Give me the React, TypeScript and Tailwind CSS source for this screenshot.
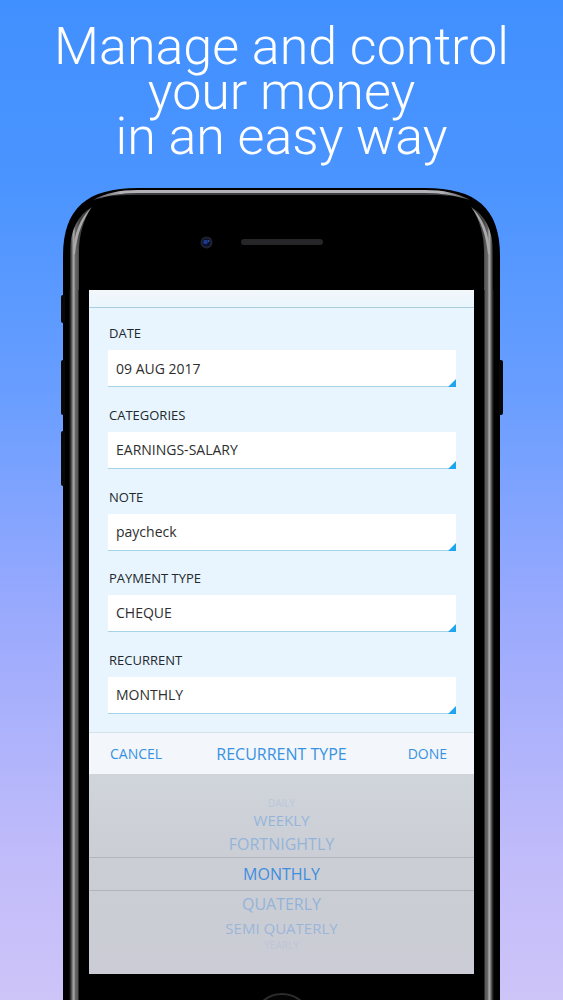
import { useState } from 'react'

const frequencies = ['WEEKLY', 'FORTNIGHTLY', 'MONTHLY', 'QUATERLY', 'SEMI QUATERLY']

const railLeft =
  'bg-[linear-gradient(90deg,#000_0px,#000_6px,#3a3a3a_8px,#6d6d6d_9px,#b5b3b3_11px,#6b6969_12px,#555_15px,#000_16px)]'
const railRight =
  'bg-[linear-gradient(270deg,#000_0px,#000_6px,#3a3a3a_8px,#6d6d6d_9px,#b5b3b3_11px,#6b6969_12px,#555_15px,#000_16px)]'

const control =
  'block h-[37px] w-full appearance-none rounded-none border-b border-[#a5d3e8] bg-white px-2 text-sm text-[#2e2e2e] outline-none'

function Field({ id, label, children }: { id: string; label: string; children: React.ReactNode }) {
  return (
    <div>
      <label htmlFor={id} className="block pb-2 pl-px text-[13px] leading-[18px] text-[#22292d]">
        {label}
      </label>
      <div className="relative">
        {children}
        <svg className="pointer-events-none absolute right-0 bottom-0 size-2" viewBox="0 0 8 8" aria-hidden="true">
          <path d="M8 0V8H0Z" fill="#1fa5ee" />
        </svg>
      </div>
    </div>
  )
}

function Corner({ side }: { side: 'left' | 'right' }) {
  return (
    <svg
      className={side === 'left' ? 'shrink-0' : 'shrink-0 -scale-x-100'}
      width="87"
      height="102"
      viewBox="0 0 87 102"
      aria-hidden="true"
    >
      <defs>
        <linearGradient id={`rail-${side}`} gradientUnits="userSpaceOnUse" x1="6" y1="0" x2="16" y2="0">
          <stop offset="0" stopColor="#000" />
          <stop offset="0.2" stopColor="#3a3a3a" />
          <stop offset="0.3" stopColor="#6d6d6d" />
          <stop offset="0.5" stopColor="#b5b3b3" />
          <stop offset="0.6" stopColor="#6b6969" />
          <stop offset="0.9" stopColor="#555" />
          <stop offset="1" stopColor="#444" />
        </linearGradient>
        <linearGradient id={`edge-${side}`} x1="0" y1="0" x2="1" y2="0">
          <stop offset="0" stopColor="#55545a" />
          <stop offset="0.5" stopColor="#b4b2b6" />
        </linearGradient>
      </defs>
      <path d="M0 102V68C0 20 24 0 75 0H87V102Z" fill="#000" />
      <path d="M7 102V64C7 42 15 27 29 19C20 32 16 48 16 64V102Z" fill={`url(#rail-${side})`} />
      <path d="M10 66C11 45 17 30 28 20C20 32 14 46 12 66Z" fill="#aaa8a8" />
      <path d="M36 11C47 7 58 7 87 7V5H74C58 5 46 8 36 11Z" fill="#3b3b3d" />
      <path d="M30 12C43 5 56 2 75 2H87V5H75C57 5 44 8 30 12Z" fill={`url(#edge-${side})`} />
    </svg>
  )
}

export default function App() {
  const [date, setDate] = useState('09 AUG 2017')
  const [note, setNote] = useState('paycheck')
  const [recurrent, setRecurrent] = useState('MONTHLY')

  return (
    <main className="flex min-h-screen flex-col overflow-hidden bg-[linear-gradient(180deg,#4190ff_0%,#4a94ff_18%,#6a9eff_40%,#9baafd_62%,#c0bbfa_85%,#cdc4f8_100%)] font-['Open_Sans','Noto_Sans',sans-serif]">
      <h1 className="mb-[29px] pt-6 text-center font-[Roboto,sans-serif] text-[52px] leading-[45px] font-light text-white">
        Manage and control
        <br />
        your money
        <br />
        in an easy way
      </h1>

      <div className="relative mx-[63px] flex flex-1 flex-col">
        <div className="absolute top-[107px] -left-[2px] h-[28px] w-1 rounded-l-xs bg-[#080808]" />
        <div className="absolute top-[172px] -left-[2px] h-[55px] w-1 rounded-l-xs bg-[#080808]" />
        <div className="absolute top-[243px] -left-[2px] h-[55px] w-1 rounded-l-xs bg-[#080808]" />
        <div className="absolute top-[172px] -right-[3px] h-[55px] w-1 rounded-r-xs bg-[#080808]" />

        <div className="flex">
          <Corner side="left" />
          <div className="flex flex-1 items-center bg-[linear-gradient(180deg,#000_0px,#000_2px,#b4b2b6_2px,#b4b2b6_5px,#3b3b3d_5px,#3b3b3d_7px,#000_7px)] pt-1.5">
            <svg className="ml-[50px]" width="13" height="13" viewBox="0 0 13 13" aria-hidden="true">
              <circle cx="6.5" cy="6.5" r="6" fill="#20232e" />
              <circle cx="6.5" cy="6.5" r="4" fill="#0b1130" />
              <circle cx="5.5" cy="6" r="2.2" fill="#1e3a94" />
              <circle cx="8.5" cy="5" r="1" fill="#34508f" />
            </svg>
            <div className="ml-7 h-[6px] w-[82px] rounded-full bg-[#262628]" />
          </div>
          <Corner side="right" />
        </div>

        <div className="flex flex-1">
          <div className={`w-[26px] shrink-0 ${railLeft}`} />

          <div className="flex min-w-0 flex-1 flex-col">
            <div className="h-[18px] border-b border-[#a9cfdf] bg-[linear-gradient(180deg,#f3f7fb,#e9f5fc)]" />
            <form
              className="flex flex-1 flex-col justify-between gap-4 bg-[#e8f5fe] pt-4 pr-[18px] pb-[18px] pl-[19px]"
              onSubmit={(e) => e.preventDefault()}
            >
              <Field id="date" label="DATE">
                <input id="date" className={control} value={date} onChange={(e) => setDate(e.target.value)} />
              </Field>
              <Field id="categories" label="CATEGORIES">
                <select id="categories" className={control}>
                  <option>EARNINGS-SALARY</option>
                </select>
              </Field>
              <Field id="note" label="NOTE">
                <input id="note" className={control} value={note} onChange={(e) => setNote(e.target.value)} />
              </Field>
              <Field id="payment" label="PAYMENT TYPE">
                <select id="payment" className={control}>
                  <option>CHEQUE</option>
                </select>
              </Field>
              <Field id="recurrent" label="RECURRENT">
                <select
                  id="recurrent"
                  className={control}
                  value={recurrent}
                  onChange={(e) => setRecurrent(e.target.value)}
                >
                  {frequencies.map((f) => (
                    <option key={f}>{f}</option>
                  ))}
                </select>
              </Field>
            </form>

            <div className="grid h-[42px] grid-cols-[1fr_auto_1fr] items-center border-t border-[#d6e2ea] bg-[#f3f6fb] px-[21px] text-sm text-[#3792e2]">
              <button type="button" className="justify-self-start">
                CANCEL
              </button>
              <h2 className="text-base">RECURRENT TYPE</h2>
              <button type="button" className="justify-self-end pr-1.5">
                DONE
              </button>
            </div>

            <ul className="flex h-[200px] flex-col bg-[linear-gradient(180deg,#d0d4db_0%,#cbced5_40%,#cbccd5_100%)] pt-[23px] text-center text-base text-[#3f8ddf]">
              <li className="h-3 text-[10px] leading-3 opacity-15">DAILY</li>
              <li className="h-[22px] text-[15px] leading-[22px] opacity-40">WEEKLY</li>
              <li className="h-[26px] leading-[26px] opacity-40">FORTNIGHTLY</li>
              <li className="border-y border-[#b3b5bb] leading-8">MONTHLY</li>
              <li className="h-[26px] leading-[26px] opacity-40">QUATERLY</li>
              <li className="h-[22px] text-[15px] leading-[22px] opacity-35">SEMI QUATERLY</li>
              <li className="h-3 text-[10px] leading-3 opacity-10">YEARLY</li>
            </ul>

            <div className="flex h-[26px] justify-center overflow-hidden bg-black">
              <svg className="mt-[19px] shrink-0" width="60" height="60" viewBox="0 0 60 60" aria-hidden="true">
                <circle cx="30" cy="30" r="29" fill="#050505" stroke="#2c2c2e" strokeWidth="2" />
              </svg>
            </div>
          </div>

          <div className={`w-[26px] shrink-0 ${railRight}`} />
        </div>
      </div>
    </main>
  )
}
